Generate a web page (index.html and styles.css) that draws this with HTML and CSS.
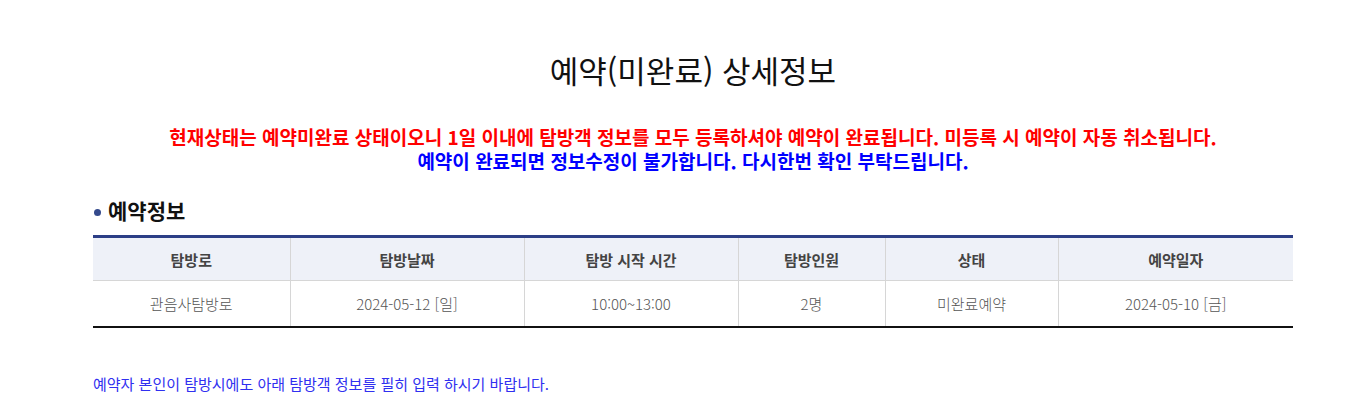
FILE: index.html
```html
<!DOCTYPE html>
<html lang="ko">
<head>
<meta charset="utf-8">
<title>예약(미완료) 상세정보</title>
<link rel="stylesheet" href="styles.css">
</head>
<body>
<div class="wrap">
  <h1 class="title">예약(미완료) 상세정보</h1>
  <div class="notice">
    <p class="red">현재상태는 예약미완료 상태이오니 1일 이내에 탐방객 정보를 모두 등록하셔야 예약이 완료됩니다. 미등록 시 예약이 자동 취소됩니다.</p>
    <p class="blue">예약이 완료되면 정보수정이 불가합니다. 다시한번 확인 부탁드립니다.</p>
  </div>
  <h2 class="section"><span class="dot"></span>예약정보</h2>
  <table class="info">
    <colgroup>
      <col style="width:197px">
      <col style="width:234px">
      <col style="width:214px">
      <col style="width:147px">
      <col style="width:173px">
      <col>
    </colgroup>
    <thead>
      <tr>
        <th>탐방로</th>
        <th>탐방날짜</th>
        <th>탐방 시작 시간</th>
        <th>탐방인원</th>
        <th>상태</th>
        <th>예약일자</th>
      </tr>
    </thead>
    <tbody>
      <tr>
        <td>관음사탐방로</td>
        <td>2024-05-12 [일]</td>
        <td>10:00~13:00</td>
        <td>2명</td>
        <td>미완료예약</td>
        <td>2024-05-10 [금]</td>
      </tr>
    </tbody>
  </table>
  <p class="guide">예약자 본인이 탐방시에도 아래 탐방객 정보를 필히 입력 하시기 바랍니다.</p>
</div>
</body>
</html>
```
FILE: styles.css
```css
html, body {
  margin: 0;
  padding: 0;
  background: #fff;
}
body {
  font-family: "Noto Sans CJK KR", "Noto Sans", sans-serif;
  color: #222;
}
.wrap {
  width: 1200px;
  margin-left: 93px;
  padding-top: 44px;
}
.title {
  margin: 0;
  text-align: center;
  font-size: 31px;
  font-weight: 400;
  line-height: 52px;
  color: #111;
}
.notice {
  margin-top: 29px;
  text-align: center;
  font-weight: 700;
  font-size: 19px;
  line-height: 24px;
}
.notice p {
  margin: 0;
}
.red { color: #ff0000; }
.blue { color: #0000ff; }
.section {
  margin: 23px 0 0;
  display: flex;
  align-items: center;
  font-size: 21px;
  font-weight: 700;
  line-height: 28px;
  color: #111;
}
.dot {
  width: 7px;
  height: 7px;
  border-radius: 50%;
  background: #344a8c;
  margin: 4px 7px 0 1px;
}
.info {
  margin-top: 11px;
  width: 1200px;
  border-collapse: collapse;
  table-layout: fixed;
  border-top: 3px solid #2c3e86;
  border-bottom: 2px solid #111;
}
.info th, .info td {
  text-align: center;
  font-size: 15px;
  border-left: 1px solid #d6d6d6;
  padding: 0;
}
.info th:first-child, .info td:first-child {
  border-left: none;
}
.info th {
  height: 42px;
  background: #eef1f8;
  color: #444;
  font-weight: 700;
  border-top: 1px solid #111;
  border-bottom: 1px solid #d6d6d6;
}
.info td {
  height: 45px;
  color: #555;
  font-weight: 300;
  border-bottom: 1px solid #d6d6d6;
}
.guide {
  margin: 46px 0 0;
  font-size: 15px;
  line-height: 20px;
  color: #3030f0;
}
```
